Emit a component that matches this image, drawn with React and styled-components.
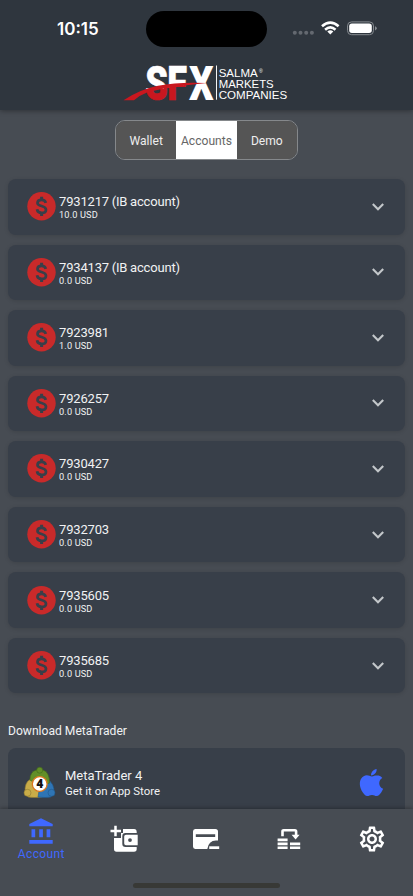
import React from 'react';
import styled, { createGlobalStyle } from 'styled-components';
import { MdOutlineSettings } from 'react-icons/md';
import { IoLogoApple } from 'react-icons/io5';

const GlobalStyle = createGlobalStyle`
  * {
    box-sizing: border-box;
  }

  body {
    margin: 0;
    background: #474c53;
    color: #f1f2f3;
    font-family: Roboto, 'Open Sans', sans-serif;
  }
`;

const Screen = styled.div`
  display: flex;
  flex-direction: column;
  width: 100%;
  height: 896px;
  overflow: hidden;
`;

const HeaderBlock = styled.header`
  flex: none;
  height: 110px;
  background: #2f363e;
  box-shadow: 0 1px 5px rgba(0, 0, 0, 0.35);
`;

const StatusBar = styled.div`
  display: grid;
  grid-template-columns: 146px 121px 1fr;
  align-items: center;
  height: 58px;
`;

const Clock = styled.div`
  padding-left: 57px;
  color: #fff;
  font: 600 17px/20px Inter, sans-serif;
`;

const Island = styled.div`
  height: 36px;
  border-radius: 18px;
  background: #000;
`;

const Indicators = styled.svg`
  width: 90px;
  height: 20px;
  margin-left: 23px;
`;

const Logo = styled.svg`
  display: block;
  width: 170px;
  height: 40px;
  margin: 4px 0 0 121px;
  overflow: visible;
`;

const Content = styled.main`
  flex: 1;
  min-height: 0;
  overflow: hidden;
  padding: 10px 8px 0;
`;

const Tabs = styled.div`
  display: flex;
  width: 183px;
  height: 40px;
  margin: 0 auto;
  overflow: hidden;
  border: 1px solid #85888b;
  border-radius: 10px;
`;

const Tab = styled.button`
  flex: 1;
  padding: 1px 0 0;
  border: 0;
  background: ${({ $active }) => ($active ? '#fff' : '#555')};
  color: ${({ $active }) => ($active ? '#666' : '#eee')};
  font: inherit;
  font-size: 12.1px;
`;

const AccountList = styled.div`
  display: flex;
  flex-direction: column;
  gap: 10px;
  margin-top: 19px;
`;

const AccountCard = styled.div`
  display: flex;
  align-items: center;
  height: 55.55px;
  padding: 0 20px 0 19px;
  border-radius: 8px;
  background: #383f49;
  box-shadow: 0 1px 4px rgba(0, 0, 0, 0.13);

  .arrow {
    margin-left: auto;
  }
`;

const AccountText = styled.div`
  padding: 2px 0 0 3px;
`;

const AccountName = styled.div`
  font-size: 13px;
  line-height: 15px;
  letter-spacing: -0.17px;
  word-spacing: -0.3px;
`;

const Balance = styled.div`
  font-size: 9.2px;
  line-height: 12px;
  letter-spacing: 0.15px;
`;

const SectionTitle = styled.h2`
  margin: 29px 0 8px;
  font-size: 12.1px;
  font-weight: 400;
  line-height: 18px;
`;

const DownloadCard = styled.div`
  display: flex;
  align-items: center;
  height: 68px;
  padding: 0 18px 0 15px;
  border-radius: 8px;
  background: #383f49;

  .apple {
    margin-left: auto;
    color: #3f68ff;
  }
`;

const DownloadText = styled.div`
  padding: 1px 0 0 9px;
`;

const AppName = styled.div`
  font-size: 13px;
  line-height: 17px;
`;

const StoreName = styled.div`
  font-size: 11.4px;
  line-height: 15px;
`;

const BottomBar = styled.footer`
  flex: none;
  display: flex;
  flex-direction: column;
  justify-content: space-between;
  height: 87px;
  padding-bottom: 8px;
  background: #474c53;
  box-shadow: 0 -1px 4px rgba(0, 0, 0, 0.3);
  z-index: 1;
`;

const NavItems = styled.nav`
  display: grid;
  grid-template-columns: repeat(5, 1fr);
  height: 60px;
`;

const NavItem = styled.a`
  display: flex;
  flex-direction: column;
  align-items: center;
  justify-content: center;
  gap: 3px;
  color: ${({ $active }) => ($active ? '#3f68ff' : '#fff')};
  font-size: 12px;
  line-height: 14px;
  letter-spacing: 0.35px;
`;

const HomeIndicator = styled.div`
  width: 147px;
  height: 5px;
  margin: 0 auto;
  border-radius: 3px;
  background: #383936;
`;

const accounts = [
    { name: '7931217 (IB account)', balance: '10.0 USD' },
    { name: '7934137 (IB account)', balance: '0.0 USD' },
    { name: '7923981', balance: '1.0 USD' },
    { name: '7926257', balance: '0.0 USD' },
    { name: '7930427', balance: '0.0 USD' },
    { name: '7932703', balance: '0.0 USD' },
    { name: '7935605', balance: '0.0 USD' },
    { name: '7935685', balance: '0.0 USD' },
];

const StatusIcons = () => (
    <Indicators viewBox="0 0 90 20">
        <g fill="#646970">
            <circle cx="4.8" cy="13.8" r="2" />
            <circle cx="10.5" cy="13.8" r="2" />
            <circle cx="16.2" cy="13.8" r="2" />
            <circle cx="21.9" cy="13.8" r="2" />
        </g>
        <g fill="none" stroke="#fff" strokeWidth="2.6">
            <path d="M32 7.3Q40.3-.1 48.6 7.3" />
            <path d="M35.1 10.7Q40.3 6.1 45.5 10.7" />
        </g>
        <path d="M37.3 12.5Q40.3 9.8 43.3 12.5L40.3 15.5Z" fill="#fff" />
        <rect x="57.5" y="2.9" width="26" height="12.8" rx="4" fill="none" stroke="#858a8f" />
        <rect x="59.2" y="4.6" width="22.6" height="9.4" rx="2.7" fill="#fff" />
        <path d="M85 7.2q1.8.6 1.8 2.1T85 11.4z" fill="#858a8f" />
    </Indicators>
);

const SfxLogo = () => (
    <Logo viewBox="121 62 170 40">
        <defs>
            <linearGradient
                id="letters"
                gradientUnits="userSpaceOnUse"
                gradientTransform="scale(1.3158 1)"
                x1="160.5" y1="43" x2="173.5" y2="133"
            >
                <stop offset=".5" stopColor="#fff" />
                <stop offset=".5" stopColor="#c9171f" />
            </linearGradient>
        </defs>
        <g fontFamily="Roboto, sans-serif" fontWeight="900" fontSize="47.5">
            <g transform="scale(.76 1)" fill="url(#letters)" stroke="url(#letters)" strokeWidth=".7">
                <text x="191.2" y="99.7">S</text>
                <text x="220.2" y="99.7">F</text>
            </g>
            <text transform="translate(189 99.7) scale(.81 1)" fill="#fff">X</text>
        </g>
        <path d="M123.5 100.3Q139 89.5 158 85.7Q180 81.5 207 83.1Q192 84.3 181 86.4Q160 88.5 147 92.5Q140 95 134 100.3Z" fill="#c9171f" />
        <path d="M216.5 65.5V99.7" stroke="#f4f4f4" />
        <g fontFamily="Liberation Sans, sans-serif" fontSize="11.4" fill="#fff">
            <text x="218.7" y="76.6" textLength="39" lengthAdjust="spacingAndGlyphs">SALMA</text>
            <text x="218.7" y="87.6" textLength="55" lengthAdjust="spacingAndGlyphs">MARKETS</text>
            <text x="218.7" y="98.6" textLength="68.5" lengthAdjust="spacingAndGlyphs">COMPANIES</text>
            <text x="259" y="72.5" fontSize="5">®</text>
        </g>
    </Logo>
);

const CoinIcon = () => (
    <svg width="29" height="29" viewBox="0 0 29 29">
        <circle cx="14.5" cy="14.3" r="14.2" fill="#c92a2a" />
        <g fill="none" stroke="#383f49" strokeWidth="2.7">
            <path d="M18.8 10.9C18.3 8.8 16.8 7.8 14.6 7.8C12.2 7.8 10.5 9 10.5 10.9C10.5 15 19 13 19 17.7C19 19.7 17.2 20.9 14.6 20.9C12 20.9 10.4 19.7 10 17.3" />
            <path d="M14.6 4.7V8M14.6 20.8V24" strokeWidth="3" />
        </g>
    </svg>
);

const ArrowIcon = () => (
    <svg className="arrow" width="14" height="10" viewBox="0 0 14 10">
        <path d="M1.8 2L7 7.2L12.2 2" fill="none" stroke="#c3c7ca" strokeWidth="2.1" />
    </svg>
);

const MetaTraderIcon = () => (
    <svg width="33" height="33" viewBox="0 0 33 33">
        <g fill="#c9ac48" stroke="#8f7930" strokeWidth=".6">
            <path d="M2 23C2.5 15 8 11 14 13L19 31Q11 32 5 31Z" />
            <circle cx="4.5" cy="26.8" r="3.5" />
        </g>
        <g fill="#2f75b5" stroke="#215788" strokeWidth=".6">
            <path d="M18 13Q29 12 31 23L28 31Q22 32 15 31Z" />
            <circle cx="28.5" cy="26.8" r="3.5" />
        </g>
        <g fill="#638f28" stroke="#426a1b" strokeWidth=".6">
            <path d="M6.8 14Q7 5.5 13.5 4H20Q26.5 6 26.6 17L17 20Z" />
            <circle cx="16.7" cy="4.2" r="3" />
        </g>
        <circle cx="16.7" cy="18" r="7.4" fill="#fff" stroke="#d9771e" strokeWidth="1.3" />
        <text x="16.8" y="22.2" textAnchor="middle" fontFamily="Open Sans, sans-serif" fontWeight="800" fontSize="11.5" fill="#111">4</text>
    </svg>
);

const BankIcon = () => (
    <svg width="24" height="26" viewBox="0 0 24 26" fill="currentColor">
        <path d="M12 .2L23.7 6V8.3H.3V6Z" />
        <path d="M2.5 11.3h3.7v8H2.5zM10.2 11.3h3.7v8h-3.7zM17.6 11.3h3.7v8h-3.7zM.3 22h23.4v3.7H.3z" />
    </svg>
);

const WalletAddIcon = () => (
    <svg width="28" height="28" viewBox="0 0 28 28">
        <path d="M13 4h11q2.7.2 2.7 3v1H15.5q-3.2 0-3.2 3.2v7.6q0 3.2 3.2 3.2h11.2v2q0 2.8-2.7 2.8H6.5Q4 26.8 4 24V13h7V8h2Z" fill="currentColor" />
        <path fillRule="evenodd" d="M16 9.8h11.7v10.4H16q-1.8 0-1.8-1.7v-7q0-1.7 1.8-1.7ZM20 13.2a1.9 1.9 0 100 3.8 1.9 1.9 0 000-3.8Z" fill="currentColor" />
        <path d="M5.5.8v10.5M.5 6h10.5" stroke="currentColor" strokeWidth="2.5" />
    </svg>
);

const CardMinusIcon = () => (
    <svg width="28" height="24" viewBox="0 0 28 24" fill="currentColor">
        <path fillRule="evenodd" d="M3.2 2H23.4Q26 2 26 4.5V13.5H24q-7.4 0-8.7 8.5H3.2Q1 22 1 19.6V4.5Q1 2 3.2 2ZM3.8 7.3v2.8h19.4V7.3Z" />
        <path d="M17.2 19.3h10V22h-10z" />
    </svg>
);

const TransferIcon = () => (
    <svg width="24" height="22" viewBox="0 0 24 22" fill="currentColor">
        <path d="M5.5 8.2V3.4q0-1.2 1.2-1.2h11.2q1.2 0 1.2 1.2v5" fill="none" stroke="currentColor" strokeWidth="2.6" />
        <path d="M14.6 6.8h8l-4 4.7z" />
        <path d="M.6 10.5h10v2.7H.6zM.6 14.5h10v2.7H.6zM.6 18.5h10v2.5H.6zM13 14.5h10.2v2.7H13zM13 18.5h10.2v2.5H13z" />
    </svg>
);

const App = () => {
    return (
        <>
            <GlobalStyle />
            <Screen>
                <HeaderBlock>
                    <StatusBar>
                        <Clock>10:15</Clock>
                        <Island />
                        <StatusIcons />
                    </StatusBar>
                    <SfxLogo />
                </HeaderBlock>
                <Content>
                    <Tabs>
                        <Tab>Wallet</Tab>
                        <Tab $active>Accounts</Tab>
                        <Tab>Demo</Tab>
                    </Tabs>
                    <AccountList>
                        {accounts.map(({ name, balance }) => (
                            <AccountCard key={name}>
                                <CoinIcon />
                                <AccountText>
                                    <AccountName>{name}</AccountName>
                                    <Balance>{balance}</Balance>
                                </AccountText>
                                <ArrowIcon />
                            </AccountCard>
                        ))}
                    </AccountList>
                    <SectionTitle>Download MetaTrader</SectionTitle>
                    <DownloadCard>
                        <MetaTraderIcon />
                        <DownloadText>
                            <AppName>MetaTrader 4</AppName>
                            <StoreName>Get it on App Store</StoreName>
                        </DownloadText>
                        <IoLogoApple className="apple" size={31} />
                    </DownloadCard>
                </Content>
                <BottomBar>
                    <NavItems>
                        <NavItem $active>
                            <BankIcon />
                            Account
                        </NavItem>
                        <NavItem><WalletAddIcon /></NavItem>
                        <NavItem><CardMinusIcon /></NavItem>
                        <NavItem><TransferIcon /></NavItem>
                        <NavItem><MdOutlineSettings size={30} /></NavItem>
                    </NavItems>
                    <HomeIndicator />
                </BottomBar>
            </Screen>
        </>
    );
};

export default App;
